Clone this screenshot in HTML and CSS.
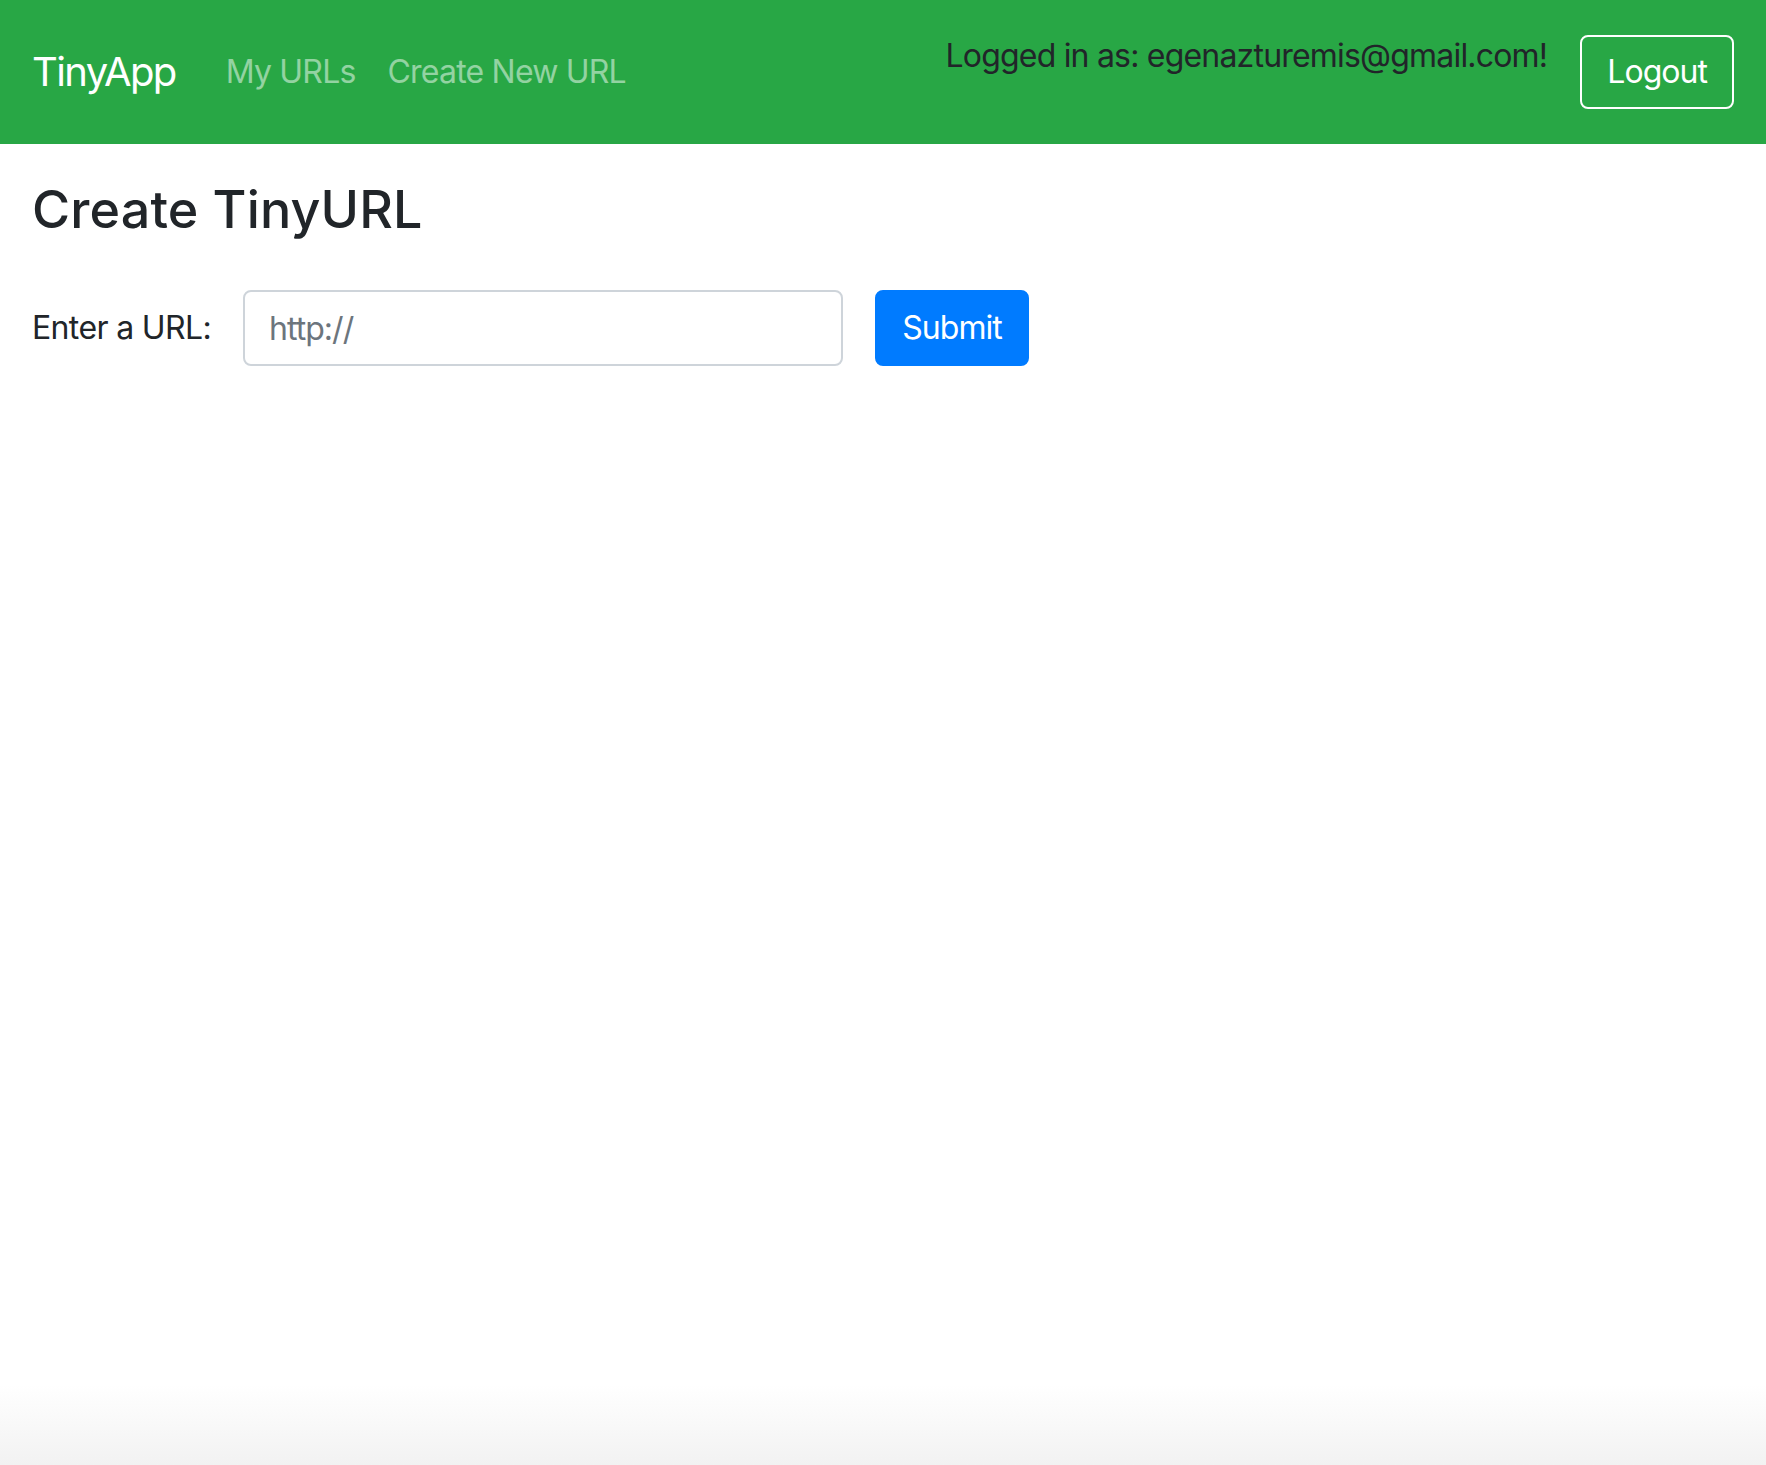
FILE: index.html
```html
<!DOCTYPE html>
<html lang="en">
<head>
<meta charset="utf-8">
<title>TinyApp</title>
<link rel="stylesheet" href="styles.css">
</head>
<body>
<nav class="navbar">
  <a class="brand" href="#">TinyApp</a>
  <div class="nav-links">
    <a class="nav-link" href="#">My URLs</a>
    <a class="nav-link" href="#">Create New URL</a>
  </div>
  <div class="nav-right">
    <p class="logged">Logged in as: egenazturemis@gmail.com!</p>
    <button class="btn-outline" type="button">Logout</button>
  </div>
</nav>
<main class="content">
  <h1 class="title">Create TinyURL</h1>
  <form class="url-form">
    <label class="label" for="longURL">Enter a URL:</label>
    <input class="input" id="longURL" type="text" placeholder="http://">
    <button class="btn-primary" type="button">Submit</button>
  </form>
</main>
</body>
</html>
```
FILE: styles.css
```css
html {
  min-height: 100%;
  background: linear-gradient(to bottom, #ffffff calc(100% - 80px), #f2f2f2 100%);
}
body {
  margin: 0;
  font-family: Inter, "Liberation Sans", sans-serif;
  color: #212529;
  font-size: 32px;
  line-height: 1.5;
  letter-spacing: -0.03em;
}
.navbar {
  display: flex;
  align-items: center;
  height: 144px;
  box-sizing: border-box;
  padding: 16px 32px;
  background: #28a745;
}
.brand {
  font-size: 40px;
  line-height: 60px;
  color: #fff;
  text-decoration: none;
  letter-spacing: -0.04em;
  margin-right: 34px;
}
.nav-links {
  display: flex;
}
.nav-link {
  padding: 0 16px;
  color: rgba(255, 255, 255, 0.5);
  text-decoration: none;
  letter-spacing: -0.025em;
}
.nav-right {
  margin-left: auto;
  display: flex;
  align-items: center;
  gap: 33px;
}
.logged {
  margin: 0 0 32px 0;
  letter-spacing: -0.025em;
}
.btn-outline {
  font: inherit;
  letter-spacing: inherit;
  color: #fff;
  background: transparent;
  border: 2px solid #fff;
  border-radius: 8px;
  height: 74px;
  padding: 0 25px;
}
.content {
  padding: 35px 32px 0;
}
.title {
  margin: 0;
  font-size: 52px;
  line-height: 1.2;
  font-weight: 500;
  letter-spacing: 0.003em;
}
.url-form {
  display: flex;
  align-items: center;
  gap: 32px;
  margin-top: 49px;
}
.label {
  letter-spacing: -0.02em;
}
.input {
  width: 600px;
  height: 76px;
  box-sizing: border-box;
  border: 2px solid #ced4da;
  border-radius: 8px;
  padding: 0 24px;
  font: inherit;
  letter-spacing: inherit;
  color: #495057;
}
.input::placeholder {
  color: #6c757d;
}
.btn-primary {
  font: inherit;
  letter-spacing: inherit;
  color: #fff;
  background: #007bff;
  border: 2px solid #007bff;
  border-radius: 8px;
  height: 76px;
  width: 154px;
}
```
